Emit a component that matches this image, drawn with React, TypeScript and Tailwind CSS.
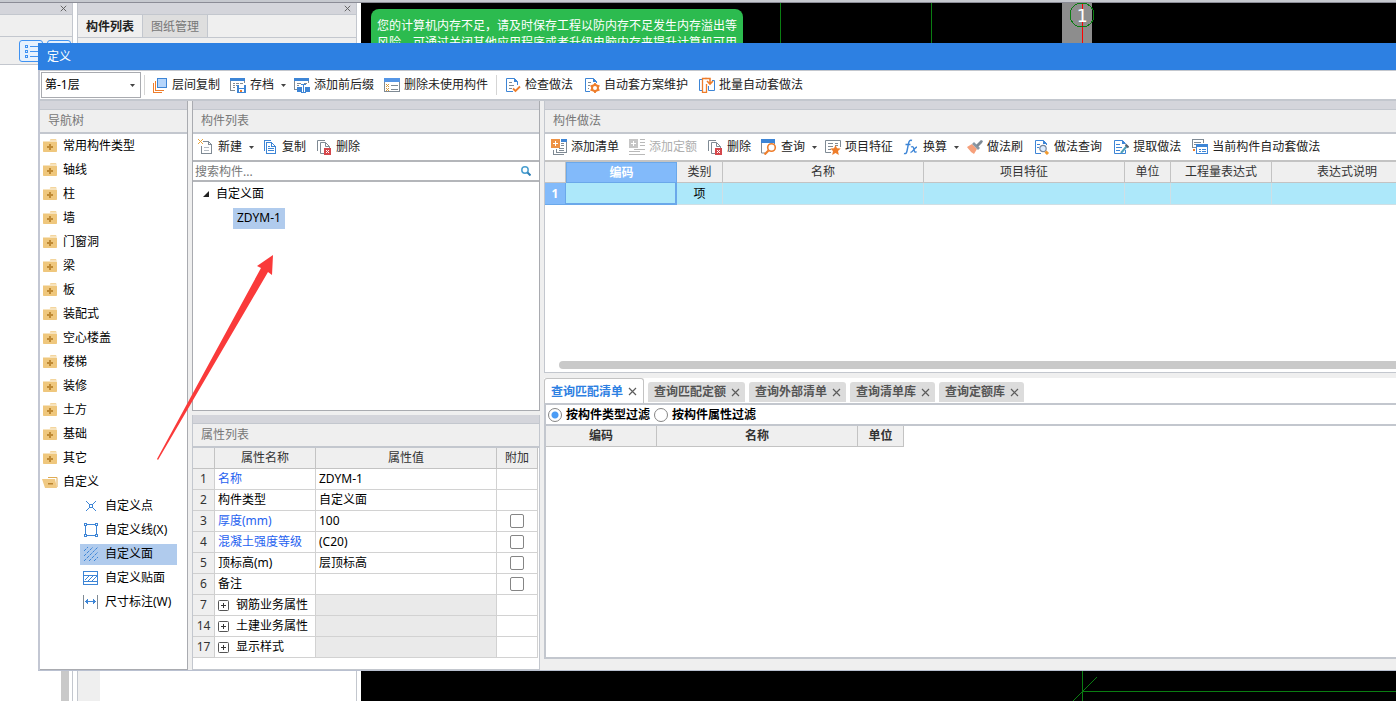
import { useState, type ReactNode } from 'react';

const BLUE = '#3d85d6';
const ORANGE = '#ee7d2b';
const GRAY = '#7f8a94';

function Icon({ children, crisp = true }: { children: ReactNode; crisp?: boolean }) {
    return (
        <svg
            width="16"
            height="16"
            viewBox="0 0 16 16"
            fill="none"
            className="block shrink-0"
            shapeRendering={crisp ? 'crispEdges' : 'auto'}
            aria-hidden="true"
        >
            {children}
        </svg>
    );
}

const Layers = () => (
    <Icon>
        <path d="M1.500 6v9.500H10M3.500 4v9.500H12" stroke={ORANGE} />
        <rect x="5.500" y="1.500" width="9" height="9" fill="#b5d5fb" stroke={BLUE} />
    </Icon>
);

const Archive = () => (
    <Icon>
        <path d="M0 1h15v3H0z" fill={BLUE} />
        <path d="M.5 4v9.500H5M14.500 4v2M3 6.500h2M6 6.500h3M10 6.500h3M3 8.500h2M6 8.500h1M3 10.500h2" stroke={GRAY} />
        <rect x="7" y="8" width="9" height="8" fill={BLUE} />
        <rect x="9" y="8" width="5" height="3" fill="#fff" />
        <rect x="9" y="12" width="5" height="3" fill="#fff" />
        <rect x="10" y="13" width="2" height="2" fill={ORANGE} />
    </Icon>
);

const Affix = () => (
    <Icon>
        <path d="M0 1h15v3H0z" fill={BLUE} />
        <path d="M.5 4v8.500H4M14.500 4v2M3 6.500h4M3 8.500h2M10 6.500h3" stroke={GRAY} />
        <path d="M3 10h5v5H3zM11 10h5v5h-5z" fill={BLUE} />
        <path d="M9.500 7v9M7 7.500h5M7 15.500h5" stroke={BLUE} />
    </Icon>
);

const UnusedList = () => (
    <Icon>
        <path d="M0 1h16v4H0z" fill="#5596e6" />
        <path d="M.5 5v9.500h15V5M7 8.500h7M7 12.500h7" stroke={GRAY} />
        <path d="M2 7h1v1h1v-1h1v1h-1v1h1v1h-1v-1h-1v1h-1v-1h1v-1h-1zM2 11h1v1h1v-1h1v1h-1v1h1v1h-1v-1h-1v1h-1v-1h1v-1h-1z" fill="#d89a3a" />
    </Icon>
);

const DocCheck = () => (
    <Icon crisp={false}>
        <path d="M8 14.500H1.500v-13h8l3 3V8" stroke={BLUE} />
        <path d="M9 1v4h4z" fill={BLUE} />
        <path d="M4 5.500h3M4 8.500h5M4 11.500h3" stroke={GRAY} />
        <path d="M8 11.500l2.500 2.500L15 9.500" stroke={ORANGE} strokeWidth="1.800" />
    </Icon>
);

const DocGear = () => (
    <Icon crisp={false}>
        <path d="M6 14.500H1.500v-13h8l3 3V6" stroke={BLUE} />
        <path d="M9 1v4h4z" fill={BLUE} />
        <path d="M4 5.500h3M4 8.500h2M4 11.500h1" stroke={GRAY} />
        <circle cx="11" cy="11" r="3" stroke={ORANGE} strokeWidth="2" />
        <path d="M11 6v2M11 14v2M6.500 8.500l2 1M13.500 12.500l2 1M6.500 13.500l2-1M13.500 9.500l2-1" stroke={ORANGE} strokeWidth="1.800" />
    </Icon>
);

const BatchDocs = () => (
    <Icon crisp={false}>
        <path d="M3 2.500H.5v11H3" stroke={BLUE} />
        <path d="M7.500 1.500h-4v14h4V7" stroke={ORANGE} strokeWidth="1.300" />
        <path d="M13 3.500h2.500v10h-6V9" stroke={BLUE} />
        <path d="M6.500 1.500h4.500V6M8 4l3 3 3-3" stroke={ORANGE} strokeWidth="1.600" />
    </Icon>
);

const NewDoc = () => (
    <Icon>
        <path d="M5 2.500h5.500l3 3v9h-10V7M10.500 2.500v3h3" stroke={GRAY} />
        <path d="M6 8.500h5M6 11.500h5" stroke="#b5bcc3" />
        <path d="M1 1h1v1h1V1h1v1H3v1h1v1H3V3H2v1H1V3h1V2H1zM4 0h1v1H4zM0 0h1v1H0zM4 4h1v1H4zM0 4h1v1H0z" fill="#e8a33a" />
    </Icon>
);

const CopyDoc = () => (
    <Icon>
        <path d="M2.500 12V1.500H9" stroke={BLUE} />
        <path d="M4.500 3.500h5l4 4v7h-9zM9.500 3.500v4h4M6 7.500h2M6 9.500h6M6 11.500h6" stroke={BLUE} />
    </Icon>
);

const DeleteDoc = () => (
    <Icon crisp={false}>
        <path d="M1.500 12V1.500H9" stroke={GRAY} />
        <path d="M8 14.500H4.500v-11h5l4 4V9M9.500 3.500v4h4" stroke={GRAY} />
        <rect x="8" y="9" width="7" height="7" fill="#d5474b" />
        <path d="M10 11l3 3M13 11l-3 3" stroke="#fff" />
    </Icon>
);

const AddList = () => (
    <Icon>
        <path d="M10 0h6v3h-6z" fill={BLUE} />
        <path d="M15.500 3v10.500h-10V10M13 15.500H2.500V11M10 4.500h3M10 6.500h3M8 9.500h5M8 11.500h5" stroke={GRAY} />
        <path d="M0 0h9v9H0z" fill="#ee9245" />
        <path d="M2 4.500h5M4.500 2v5" stroke="#fff" />
    </Icon>
);

const AddQuota = () => (
    <Icon>
        <path d="M0 0h9v9H0z" fill="#c6c6c6" />
        <path d="M2 4.500h5M4.500 2v5" stroke="#fff" />
        <path d="M11 .5h5M11 3.500h5M11 6.500h5M5 10.500h11M0 12.500h11M0 15.500h16" stroke="#b9b9b9" />
    </Icon>
);

const Query = () => (
    <Icon crisp={false}>
        <path d="M0 0h14v4H0z" fill={BLUE} />
        <path d="M.5 4v10H4M13.500 4v1" stroke={GRAY} />
        <circle cx="10.500" cy="8.500" r="3.800" fill="#fff" stroke={ORANGE} strokeWidth="1.600" />
        <path d="M7.500 11.500L3.500 15.500" stroke={ORANGE} strokeWidth="2.200" />
    </Icon>
);

const Feature = () => (
    <Icon crisp={false}>
        <path d="M6 13.500H.5V1.500h15V8M3 4.500h5M3 7.500h5M3 10.500h3M10 4.500h3M10 6.500h3" stroke={GRAY} />
        <path d="M10.500 6l1.500 3.200 3.700.4-2.700 2.500.8 3.800-3.300-2-3.300 2 .8-3.800-2.700-2.500 3.700-.4z" fill={ORANGE} />
    </Icon>
);

const Formula = () => (
    <Icon crisp={false}>
        <path d="M9 1.500C7 .6 6 2 5.500 4.500L4 12c-.5 2.500-1.500 3-3 2.500M2.500 5.500h5" stroke={BLUE} strokeWidth="1.400" />
        <path d="M8 8c2-1 2.500 0 3 2.500s1 3.500 2.500 2M14 8c-2 0-4.500 5.500-6.500 5.500" stroke={BLUE} strokeWidth="1.300" />
    </Icon>
);

const Brush = () => (
    <Icon crisp={false}>
        <path d="M0 8l5-3 5 5-3 5c-1-1-2-1-3-2-1-2-3-3-4-5z" fill="#f6a07b" />
        <path d="M5 5l2-2 6 6-2 2z" fill="#8b97a3" />
        <path d="M9 6l5-5 2 1-1 2-4 4z" fill={GRAY} />
    </Icon>
);

const DocSearch = () => (
    <Icon crisp={false}>
        <path d="M7 14.500H1.500v-13h8l3 3V6" stroke={BLUE} />
        <path d="M9 1v4h4zM3 5h3v1H3zM3 8h2v1H3z" fill={BLUE} />
        <circle cx="9" cy="9.500" r="3.200" fill="#dcecff" stroke="#77879c" strokeWidth="1.200" />
        <path d="M11.500 12.500l2.500 2.500" stroke="#f29a2e" strokeWidth="3" />
    </Icon>
);

const Extract = () => (
    <Icon crisp={false}>
        <path d="M12.500 11v3.500h-11v-13h8l3 3" stroke={BLUE} />
        <path d="M9 1v4h4zM3 5h4v1H3zM3 8h6v1H3zM3 11h4v1H3z" fill={BLUE} />
        <path d="M8 14l5.500-6.500" stroke="#4f9fb8" strokeWidth="2" />
        <path d="M12.500 5.500l3 3" stroke="#55606b" strokeWidth="2" />
    </Icon>
);

const AutoApply = () => (
    <Icon>
        <path d="M.5 8.500V.5h11V4M2 3.500h7M2 5.500h2M1 8.500h3" stroke={GRAY} />
        <path d="M4 5h12v3H4z" fill={BLUE} />
        <path d="M4.500 8v6.500h11V8M7 10.500h2M10 10.500h4M7 12.500h2M10 12.500h4" stroke={BLUE} />
        <path d="M1 10h2v2H1z" fill={ORANGE} />
    </Icon>
);

const Folder = () => (
    <Icon crisp={false}>
        <path d="M1 3.500h13c.6 0 1 .4 1 1V13c0 .6-.4 1-1 1H2c-.6 0-1-.4-1-1z" fill="#efc77d" />
        <path d="M8.500 1.200h5.500l.8 1.300H7.700z" fill="#efc77d" />
        <path d="M7 6h2v2h2v2H9v2H7v-2H5V8h2z" fill="#bf8a35" />
    </Icon>
);

const FolderOpen = () => (
    <Icon crisp={false}>
        <path d="M6 3.500h9V13" stroke="#dfac55" />
        <path d="M0 5h13l2 9H3z" fill="#f0c983" />
        <path d="M6 9h5v1.500H6z" fill="#b98330" />
    </Icon>
);

const PointIcon = () => (
    <Icon>
        <rect x="6.500" y="6.500" width="3" height="3" stroke={BLUE} />
        <path d="M3 3l3 3M13 3l-3 3M3 13l3-3M13 13l-3-3" stroke={BLUE} shapeRendering="auto" />
    </Icon>
);

const LineIcon = () => (
    <Icon>
        <path d="M2.500 3v10M13.500 3v10M3 2.500h10M3 13.500h10" stroke={BLUE} />
        <path d="M1 1h3v3H1zM12 1h3v3h-3zM1 12h3v3H1zM12 12h3v3h-3z" fill={BLUE} />
        <path d="M2 2h1v1H2zM13 2h1v1h-1zM2 13h1v1H2zM13 13h1v1h-1z" fill="#fff" />
    </Icon>
);

const FaceIcon = () => (
    <Icon crisp={false}>
        <path d="M1 5l4-4M1 10l9-9M1 15L15 1M6 15l9-9M11 15l4-4" stroke={BLUE} strokeDasharray="3 1" />
    </Icon>
);

const PasteFaceIcon = () => (
    <Icon>
        <path d="M.5 1.500h14v13H.5zM1 5.500h13M1 11.500h13" stroke={BLUE} />
        <path d="M2 10l4-4M5 11l5-5M9 11l5-5" stroke={BLUE} shapeRendering="auto" />
    </Icon>
);

const DimensionIcon = () => (
    <Icon>
        <path d="M.5 1v14M14.500 1v14" stroke={GRAY} />
        <path d="M3 7.500h9" stroke={BLUE} />
        <path d="M2 7.500l3-3v6zM13 7.500l-3-3v6z" fill={BLUE} />
    </Icon>
);

function Caret() {
    return (
        <svg width="5" height="3" viewBox="0 0 5 3" className="ml-[3px] shrink-0" aria-hidden="true">
            <path d="M0 0h5L2.500 3z" fill="#444" />
        </svg>
    );
}

function CloseMark({ size = 9 }: { size?: number }) {
    return (
        <svg width={size} height={size} viewBox="0 0 9 9" aria-hidden="true">
            <path d="M1 1l7 7M8 1L1 8" stroke="#5c5c5c" strokeWidth="1.200" />
        </svg>
    );
}

interface ToolProps {
    icon: ReactNode;
    label: string;
    menu?: boolean;
    disabled?: boolean;
}

function Tool({ icon, label, menu, disabled }: ToolProps) {
    return (
        <button
            type="button"
            disabled={disabled}
            className={`flex h-6 shrink-0 items-center gap-1 rounded-sm pl-[5px] whitespace-nowrap hover:bg-[#e8f1fc] ${menu ? 'pr-[3px]' : 'pr-[5px]'} ${disabled ? 'text-[#aeaeae]' : 'text-[#222]'}`}
        >
            {icon}
            <span>{label}</span>
            {menu && <Caret />}
        </button>
    );
}

function PanelHeader({ title }: { title: string }) {
    return (
        <div className="shrink-0">
            <div className="h-[9px] border-b border-[#c3c7ce] bg-[#d4d5db]" />
            <h2 className="flex h-6 items-center border-b-2 border-[#c3c7ce] bg-[#efefef] pl-2 text-[#777]">{title}</h2>
        </div>
    );
}

const categories = ['常用构件类型', '轴线', '柱', '墙', '门窗洞', '梁', '板', '装配式', '空心楼盖', '楼梯', '装修', '土方', '基础', '其它'];

const customItems = [
    { label: '自定义点', icon: <PointIcon /> },
    { label: '自定义线(X)', icon: <LineIcon /> },
    { label: '自定义面', icon: <FaceIcon /> },
    { label: '自定义贴面', icon: <PasteFaceIcon /> },
    { label: '尺寸标注(W)', icon: <DimensionIcon /> },
];

function NavTree() {
    const [selected, setSelected] = useState('自定义面');

    return (
        <nav className="flex w-[148px] shrink-0 flex-col border-r border-b border-[#a9abb0] bg-white">
            <PanelHeader title="导航树" />
            <ul>
                {categories.map((name) => (
                    <li key={name}>
                        <button type="button" className="flex h-6 w-full items-center gap-[5px] pl-[2px]">
                            <Folder />
                            {name}
                        </button>
                    </li>
                ))}
                <li>
                    <button type="button" className="flex h-6 w-full items-center gap-[5px] pl-[2px]">
                        <FolderOpen />
                        自定义
                    </button>
                    <ul className="pl-10">
                        {customItems.map((item) => (
                            <li key={item.label} className="flex h-6 items-center">
                                <button
                                    type="button"
                                    onClick={() => setSelected(item.label)}
                                    className={`flex h-[21px] w-[97px] items-center gap-[6px] pl-[3px] whitespace-nowrap ${selected === item.label ? 'bg-[#b0cbed]' : ''}`}
                                >
                                    {item.icon}
                                    {item.label}
                                </button>
                            </li>
                        ))}
                    </ul>
                </li>
            </ul>
        </nav>
    );
}

function ComponentList() {
    return (
        <section className="flex min-h-0 flex-1 flex-col border-r border-b border-l border-[#a9abb0] bg-white">
            <PanelHeader title="构件列表" />
            <div className="flex h-[26px] shrink-0 items-center">
                <Tool icon={<NewDoc />} label="新建" menu />
                <Tool icon={<CopyDoc />} label="复制" />
                <Tool icon={<DeleteDoc />} label="删除" />
            </div>
            <div className="flex h-[22px] shrink-0 items-center border-y-2 border-[#b4b6ba] pr-2">
                <input
                    type="text"
                    aria-label="搜索构件"
                    placeholder="搜索构件..."
                    className="h-full min-w-0 flex-1 pl-[2px] outline-none placeholder:text-[#777]"
                />
                <svg width="10" height="10" viewBox="0 0 10 10" fill="none" aria-hidden="true">
                    <circle cx="4" cy="4" r="3.200" stroke="#4a9fd0" strokeWidth="1.500" />
                    <path d="M6.500 6.500l3 3" stroke="#2f7fb5" strokeWidth="2" />
                </svg>
            </div>
            <ul>
                <li>
                    <div className="flex h-6 items-center gap-[7px] pl-[10px]">
                        <svg width="6" height="6" viewBox="0 0 6 6" aria-hidden="true">
                            <path d="M6 0v6H0z" fill="#222" />
                        </svg>
                        自定义面
                    </div>
                    <ul className="pl-10">
                        <li className="flex h-6 items-center">
                            <button type="button" className="h-[21px] bg-[#b0cbed] px-1">ZDYM-1</button>
                        </li>
                    </ul>
                </li>
            </ul>
        </section>
    );
}

const properties = [
    { no: 1, name: '名称', value: 'ZDYM-1', key: true },
    { no: 2, name: '构件类型', value: '自定义面' },
    { no: 3, name: '厚度(mm)', value: '100', key: true, extra: true },
    { no: 4, name: '混凝土强度等级', value: '(C20)', key: true, extra: true },
    { no: 5, name: '顶标高(m)', value: '层顶标高', extra: true },
    { no: 6, name: '备注', value: '', extra: true },
    { no: 7, name: '钢筋业务属性', value: '', group: true },
    { no: 14, name: '土建业务属性', value: '', group: true },
    { no: 17, name: '显示样式', value: '', group: true },
];

function ExpandMark() {
    return (
        <svg width="11" height="11" viewBox="0 0 11 11" fill="none" aria-hidden="true">
            <rect x=".5" y=".5" width="10" height="10" rx="1" stroke="#555" />
            <path d="M3 5.500h5M5.500 3v5" stroke="#333" />
        </svg>
    );
}

function PropertyList() {
    return (
        <section className="flex shrink-0 flex-col border-r border-b border-l border-[#c3c7ce] bg-white">
            <PanelHeader title="属性列表" />
            <table className="mb-[11px] w-[345px] table-fixed border-separate border-spacing-0">
                <colgroup>
                    <col className="w-[22px]" />
                    <col className="w-[101px]" />
                    <col />
                    <col className="w-[41px]" />
                </colgroup>
                <thead>
                    <tr className="h-[21px] bg-[#efefef] text-[#333]">
                        <th className="border-r border-b border-[#c3c3c3] p-0" />
                        <th className="border-r border-b border-[#c3c3c3] p-0 font-normal">属性名称</th>
                        <th className="border-r border-b border-[#c3c3c3] p-0 font-normal">属性值</th>
                        <th className="border-r border-b border-[#c3c3c3] p-0 font-normal">附加</th>
                    </tr>
                </thead>
                <tbody>
                    {properties.map((row) => (
                        <tr key={row.no} className="h-[21px]">
                            <td className="border-r border-b border-[#cfcfcf] bg-[#efefef] p-0 text-center text-[#333]">{row.no}</td>
                            <td className={`border-r border-b border-[#d2d2d2] p-0 pl-[3px] whitespace-nowrap ${row.key ? 'text-[#1f62f0]' : ''}`}>
                                {row.group ? (
                                    <button type="button" className="flex items-center gap-[7px]">
                                        <ExpandMark />
                                        {row.name}
                                    </button>
                                ) : (
                                    row.name
                                )}
                            </td>
                            <td className={`border-r border-b border-[#d2d2d2] p-0 pl-[3px] ${row.group ? 'bg-[#eaeaea]' : ''}`}>{row.value}</td>
                            <td className="border-r border-b border-[#d2d2d2] p-0">
                                {row.extra && (
                                    <input
                                        type="checkbox"
                                        aria-label={`${row.name} 附加`}
                                        className="mx-auto block size-[14px] appearance-none rounded-[2px] border border-[#858585] bg-white checked:bg-[#3f92f2]"
                                    />
                                )}
                            </td>
                        </tr>
                    ))}
                </tbody>
            </table>
        </section>
    );
}

function MethodPanel() {
    const head = 'border-r border-b border-[#c3c3c3] p-0 font-normal';
    const cell = 'border-r border-b border-[#cfdfe5] p-0';

    return (
        <section className="flex h-[272px] shrink-0 flex-col border-b border-l border-[#c3c7ce] bg-white">
            <PanelHeader title="构件做法" />
            <div className="flex h-[28px] shrink-0 items-center overflow-hidden border-b-2 border-[#c3c3c3] pl-px">
                <Tool icon={<AddList />} label="添加清单" />
                <Tool icon={<AddQuota />} label="添加定额" disabled />
                <Tool icon={<DeleteDoc />} label="删除" />
                <Tool icon={<Query />} label="查询" menu />
                <Tool icon={<Feature />} label="项目特征" />
                <Tool icon={<Formula />} label="换算" menu />
                <div className="flex gap-px">
                    <Tool icon={<Brush />} label="做法刷" />
                    <Tool icon={<DocSearch />} label="做法查询" />
                    <Tool icon={<Extract />} label="提取做法" />
                    <Tool icon={<AutoApply />} label="当前构件自动套做法" />
                </div>
            </div>
            <div className="min-h-0 flex-1 overflow-hidden">
                <table className="w-[878px] table-fixed border-separate border-spacing-0">
                    <colgroup>
                        <col className="w-[21px]" />
                        <col className="w-[111px]" />
                        <col className="w-[46px]" />
                        <col className="w-[201px]" />
                        <col className="w-[201px]" />
                        <col className="w-[46px]" />
                        <col className="w-[101px]" />
                        <col />
                    </colgroup>
                    <thead>
                        <tr className="h-[21px] bg-[#efefef] text-[#333]">
                            <th className={head} />
                            <th className="border border-[#6aa8ea] bg-[#82bafa] p-0 font-bold text-white">编码</th>
                            <th className={head}>类别</th>
                            <th className={head}>名称</th>
                            <th className={head}>项目特征</th>
                            <th className={head}>单位</th>
                            <th className={head}>工程量表达式</th>
                            <th className={head}>表达式说明</th>
                        </tr>
                    </thead>
                    <tbody>
                        <tr className="h-[22px] bg-[#ade8fa]">
                            <td className="border-r border-b border-[#6aa8ea] bg-[#82bafa] p-0 text-center font-bold text-white">1</td>
                            <td className="border-r-2 border-b-2 border-[#6aa8ea] p-0" />
                            <td className={`${cell} text-center`}>项</td>
                            <td className={cell} />
                            <td className={cell} />
                            <td className={cell} />
                            <td className={cell} />
                            <td className={cell} />
                        </tr>
                    </tbody>
                </table>
            </div>
            <div className="mb-[3px] ml-[14px] h-2 shrink-0 rounded-l-full bg-[#c9c9c9]" />
        </section>
    );
}

const queryTabs = ['查询匹配清单', '查询匹配定额', '查询外部清单', '查询清单库', '查询定额库'];

function QueryPanel() {
    const [active, setActive] = useState(queryTabs[0]);
    const [filter, setFilter] = useState('按构件类型过滤');

    return (
        <section className="mt-[5px] mb-[11px] flex min-h-0 flex-1 flex-col border-b-2 border-[#c3c7ce]">
            <div role="tablist" className="flex h-[25px] shrink-0 items-end gap-1 bg-white">
                {queryTabs.map((tab) => (
                    <button
                        key={tab}
                        type="button"
                        role="tab"
                        aria-selected={active === tab}
                        onClick={() => setActive(tab)}
                        className={
                            active === tab
                                ? 'flex h-[25px] items-center gap-[5px] rounded-t-[3px] border border-b-0 border-[#c3c3c3] bg-white px-[6px] pt-px font-bold text-[#2d80e2]'
                                : 'mb-px flex h-5 items-center gap-[5px] rounded-t-[3px] bg-[#dcdcdc] pr-[5px] pl-[6px] font-bold text-[#555]'
                        }
                    >
                        {tab}
                        <CloseMark />
                    </button>
                ))}
            </div>
            <div className="flex min-h-0 flex-1 flex-col border-l-2 border-[#c3c7ce] bg-white">
                <div className="flex h-[23px] shrink-0 items-center gap-1 border-y-2 border-[#c3c7ce] pl-[2px] font-bold">
                    {['按构件类型过滤', '按构件属性过滤'].map((name) => (
                        <label key={name} className="flex items-center gap-1">
                            <input
                                type="radio"
                                name="filter"
                                checked={filter === name}
                                onChange={() => setFilter(name)}
                                className="size-[14px] appearance-none rounded-full border border-[#858585] bg-white checked:bg-[radial-gradient(circle,#4b9cf5_3px,#ffffff_4px)]"
                            />
                            {name}
                        </label>
                    ))}
                </div>
                <table className="w-[358px] table-fixed border-separate border-spacing-0">
                    <thead>
                        <tr className="h-[21px] bg-[#efefef] text-[#333]">
                            <th className="w-[111px] border-r border-b border-[#c3c3c3] p-0 font-bold">编码</th>
                            <th className="border-r border-b border-[#c3c3c3] p-0 font-bold">名称</th>
                            <th className="w-[46px] border-r border-b border-[#c3c3c3] p-0 font-bold">单位</th>
                        </tr>
                    </thead>
                </table>
            </div>
        </section>
    );
}

function MainToolbar() {
    return (
        <div className="flex h-[31px] shrink-0 items-center overflow-hidden border-t border-b-2 border-[#c3c7ce] bg-white">
            <div className="relative ml-px shrink-0">
                <select aria-label="楼层" className="block h-[26px] w-[100px] appearance-none border border-[#a9abb0] bg-white pl-[3px]">
                    <option>第-1层</option>
                </select>
                <svg width="5" height="3" viewBox="0 0 5 3" className="pointer-events-none absolute top-[12px] right-[6px]" aria-hidden="true">
                    <path d="M0 0h5L2.500 3z" fill="#444" />
                </svg>
            </div>
            <div className="mr-[2px] ml-[3px] h-5 w-px bg-[#d5d5d5]" />
            <Tool icon={<Layers />} label="层间复制" />
            <Tool icon={<Archive />} label="存档" menu />
            <Tool icon={<Affix />} label="添加前后缀" />
            <Tool icon={<UnusedList />} label="删除未使用构件" />
            <div className="mx-[3px] h-5 w-px bg-[#d5d5d5]" />
            <div className="flex gap-px">
                <Tool icon={<DocCheck />} label="检查做法" />
                <Tool icon={<DocGear />} label="自动套方案维护" />
                <Tool icon={<BatchDocs />} label="批量自动套做法" />
            </div>
        </div>
    );
}

function DefinitionWindow() {
    return (
        <div
            role="dialog"
            aria-label="定义"
            className="absolute top-[43px] right-0 bottom-[30px] left-[38px] flex flex-col border-b border-[#b9c0d0] bg-[#efefef]"
        >
            <h1 className="flex h-[27px] shrink-0 items-center bg-[#2d80e2] pl-[9px] text-white">定义</h1>
            <div className="flex min-h-0 flex-1 flex-col border-l-2 border-[#c3c7d3]">
                <MainToolbar />
                <div className="flex min-h-0 flex-1 gap-1">
                    <NavTree />
                    <div className="flex w-[348px] shrink-0 flex-col gap-1">
                        <ComponentList />
                        <PropertyList />
                    </div>
                    <div className="flex min-w-0 flex-1 flex-col">
                        <MethodPanel />
                        <QueryPanel />
                    </div>
                </div>
            </div>
        </div>
    );
}

function ListGlyph() {
    return (
        <svg width="14" height="14" viewBox="0 0 14 14" fill="none" shapeRendering="crispEdges" aria-hidden="true">
            <path d="M1.500 1.500h2v2h-2zM1.500 6.500h2v2h-2zM1.500 11.500h2v2h-2zM6 2.500h8M6 7.500h8M6 12.500h8" stroke="#3f92f2" />
        </svg>
    );
}

function Workspace() {
    return (
        <div className="flex min-h-0 flex-1">
            <aside className="flex w-[73px] shrink-0 flex-col border-r border-[#c3c7ce] bg-white">
                <div className="flex h-3 shrink-0 items-center justify-end border-b border-[#c3c7ce] bg-[#d4d5db] pr-[5px]">
                    <CloseMark size={7} />
                </div>
                <div className="h-[22px] shrink-0 border-b border-[#c3c7ce] bg-[#efefef]" />
                <div className="flex h-7 shrink-0 items-center gap-1 overflow-hidden border-b border-[#c3c7ce] bg-[#efefef] pl-[19px]">
                    <button type="button" aria-label="列表" className="flex h-[22px] w-6 shrink-0 items-center justify-center rounded-[3px] border border-[#3f92f2] bg-[#e6f1fd]">
                        <ListGlyph />
                    </button>
                    <button type="button" aria-label="详情" className="flex h-[22px] w-6 shrink-0 items-center justify-center rounded-[3px] border border-[#3f92f2] bg-[#e6f1fd]">
                        <ListGlyph />
                    </button>
                </div>
                <div className="mr-[3px] w-2 flex-1 self-end bg-[#c9c9c9]" />
            </aside>
            <aside className="mx-1 flex w-[280px] shrink-0 flex-col border-x border-[#c3c7ce] bg-white">
                <div className="flex h-3 shrink-0 items-center justify-end border-b border-[#c3c7ce] bg-[#d4d5db] pr-[5px]">
                    <CloseMark size={7} />
                </div>
                <div className="flex h-[23px] shrink-0 border-b border-[#c3c7ce] bg-[#efefef]">
                    <button type="button" className="w-[65px] border-r border-[#c3c7ce] pt-px font-bold text-[#222]">构件列表</button>
                    <button type="button" className="w-[65px] border-r border-[#c3c7ce] bg-[#dedede] pt-px text-[#777]">图纸管理</button>
                </div>
                <div className="h-7 shrink-0 bg-[#efefef]" />
                <div className="w-[22px] flex-1 bg-[#efefef]" />
            </aside>
            <main className="relative min-w-0 flex-1 bg-black">
                <svg className="block h-full w-full" shapeRendering="crispEdges" fill="none" aria-hidden="true">
                    <path d="M419.500 0v60M570.500 0v60" stroke="#0a7d12" />
                    <rect x="701" y="0" width="30" height="60" fill="#8d8d8d" />
                    <path d="M721.500 0v60" stroke="#f00" />
                    <circle cx="721" cy="12" r="12" stroke="#0a7d12" />
                    <text x="721" y="19" textAnchor="middle" fill="#fff" fontSize="18" fontFamily="DejaVu Sans Mono, monospace">1</text>
                    <path d="M721.500 660v60M721 688.500h2000M712 698l24-24" stroke="#0a7d12" />
                </svg>
                <div role="status" className="absolute top-[6px] left-[10px] w-[372px] rounded-lg bg-[#2cbb4f] px-[6px] pt-2 pb-3 leading-[17px] text-white">
                    您的计算机内存不足，请及时保存工程以防内存不足发生内存溢出等风险，可通过关闭其他应用程序或者升级电脑内存来提升计算机可用
                </div>
            </main>
        </div>
    );
}

export default function App() {
    return (
        <div className="relative flex h-screen flex-col overflow-hidden bg-white font-['Noto_Sans','Noto_Sans_CJK_SC',sans-serif] text-[12px] leading-4 text-black">
            <div className="h-[3px] shrink-0 border-b border-[#8b8c96] bg-[#c6c9cf]" />
            <Workspace />
            <DefinitionWindow />
            {/* pointer from the custom face entry to its component */}
            <svg className="pointer-events-none absolute top-[254px] left-[156px]" width="120" height="208" viewBox="0 0 120 208" aria-hidden="true">
                <path d="M117 1L116 21L112 18L2 206L1 205L105 14L101 12Z" fill="#fa3a3a" />
            </svg>
        </div>
    );
}
